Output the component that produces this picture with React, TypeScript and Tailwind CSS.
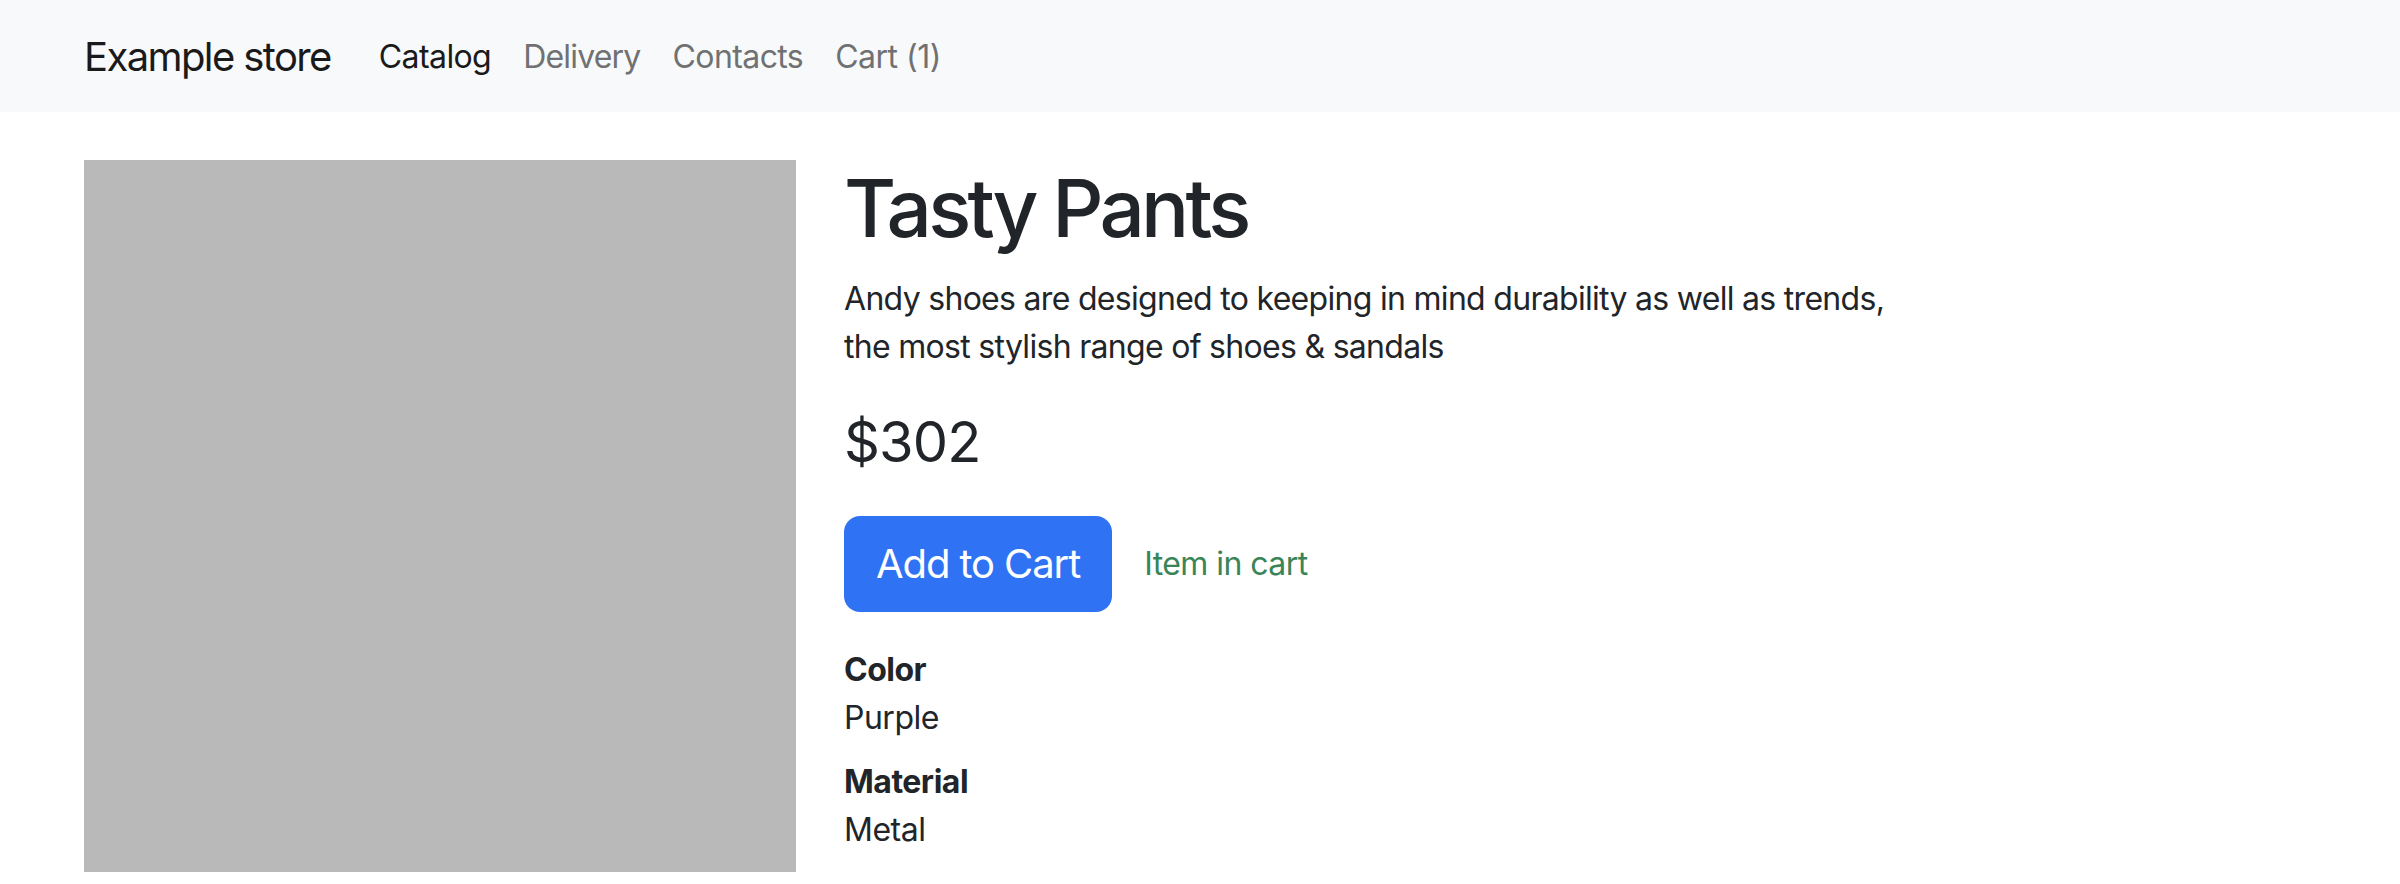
import React from "react";

export default function App() {
  return (
    <div className="min-h-[884px] bg-white text-[#212529] [font-family:Inter,'Noto_Sans',sans-serif]">
      <nav className="h-[112px] bg-[#f8f9fa]">
        <div className="mx-auto flex h-full w-[2280px] items-center px-[24px] pt-[2px]">
          <a className="mr-[32px] py-[10px] text-[40px] leading-[60px] text-[#1a1a1a] tracking-[-1.6px]">Example store</a>
          <ul className="flex items-center">
            <li><a className="block px-[16px] py-[16px] text-[32px] leading-[48px] text-[#1a1a1a] tracking-[-0.6px]">Catalog</a></li>
            <li><a className="block px-[16px] py-[16px] text-[32px] leading-[48px] text-[#707172] tracking-[-0.8px]">Delivery</a></li>
            <li><a className="block px-[16px] py-[16px] text-[32px] leading-[48px] text-[#707172] tracking-[-0.6px]">Contacts</a></li>
            <li><a className="block px-[16px] py-[16px] text-[32px] leading-[48px] text-[#707172] tracking-[-0.5px]">Cart (1)</a></li>
          </ul>
        </div>
      </nav>
      <div className="mx-auto mt-[48px] flex w-[2280px] gap-[48px] px-[24px]">
        <div className="h-[712px] w-[712px] shrink-0 bg-[#b9b9b9]" />
        <div className="w-[1092px]">
          <h1 className="mb-[16px] text-[80px] font-medium leading-[96px] tracking-[-3.8px]">Tasty Pants</h1>
          <p className="pt-[3px] text-[32px] leading-[48px] tracking-[-0.7px]">
            Andy shoes are designed to keeping in mind durability as well as trends, the most stylish range of shoes &amp; sandals
          </p>
          <h3 className="mt-[38px] text-[56px] font-normal leading-[67px] tracking-[-0.9px]">$302</h3>
          <div className="mt-[40px] flex items-center">
            <button className="h-[96px] rounded-[16px] bg-[#2f72f4] px-[32px] text-[40px] leading-[60px] text-white tracking-[-1.1px]">Add to Cart</button>
            <span className="ml-[32px] text-[32px] leading-[48px] text-[#3a8558] tracking-[-0.55px]">Item in cart</span>
          </div>
          <dl className="mt-[34px]">
            <dt className="text-[32px] font-bold leading-[48px] tracking-[-0.5px]">Color</dt>
            <dd className="mb-[16px] text-[32px] leading-[48px] tracking-[-0.5px]">Purple</dd>
            <dt className="text-[32px] font-bold leading-[48px] tracking-[-0.5px]">Material</dt>
            <dd className="mb-[16px] text-[32px] leading-[48px] tracking-[-0.5px]">Metal</dd>
          </dl>
        </div>
      </div>
    </div>
  );
}
